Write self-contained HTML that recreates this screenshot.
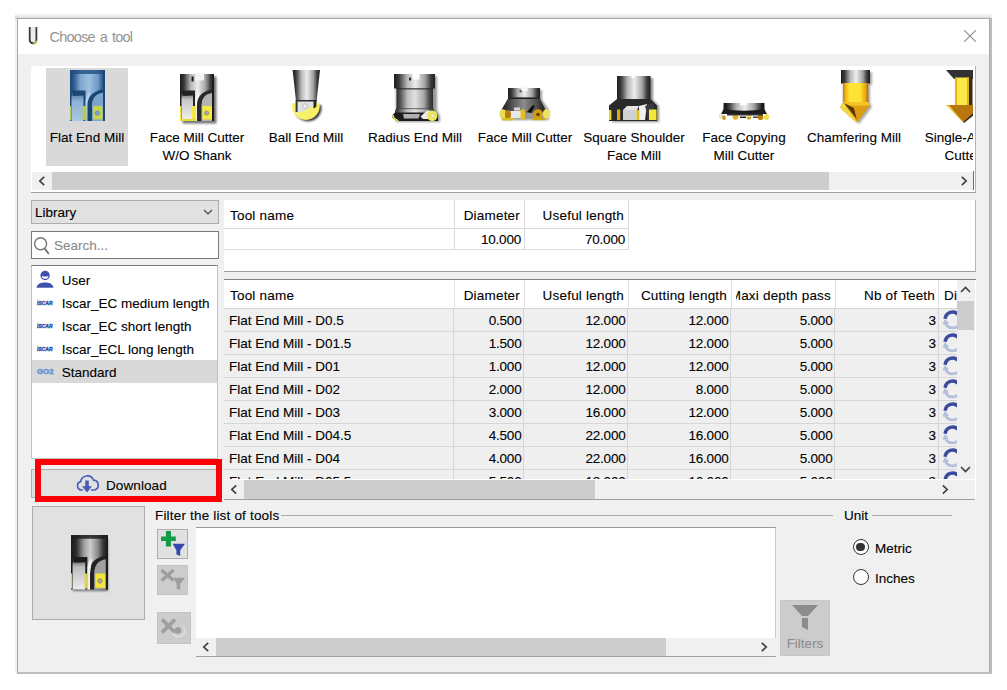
<!DOCTYPE html>
<html lang="en"><head><meta charset="utf-8"><title>Choose a tool</title>
<style>
*{box-sizing:border-box;margin:0;padding:0}
html,body{width:1007px;height:690px;overflow:hidden;background:#fff}
body{font-family:"Liberation Sans",sans-serif;font-size:13.5px;color:#000;position:relative;-webkit-text-stroke:.1px}
.abs{position:absolute}
.combo{background:#e1e1e1;border:1px solid #adadad}
.tl{text-align:center;line-height:18px;white-space:nowrap}
.li{line-height:16px;white-space:nowrap}
.hd{line-height:16px;white-space:nowrap;letter-spacing:.2px}
.r{text-align:right}
.row{position:absolute;left:0;width:733px;height:23px;background:#efefef;border-bottom:1px solid #d6d6d6}
.c{position:absolute;top:0;height:23px;line-height:23.5px;white-space:nowrap;border-right:1px solid #d6d6d6}
.c0{left:0;width:230px;padding-left:5px}
.c1{left:230px;width:70px;text-align:right;padding-right:1.5px;letter-spacing:-.2px}
.c2{left:300px;width:104px;text-align:right;padding-right:1.5px;letter-spacing:-.2px}
.c3{left:404px;width:103px;text-align:right;padding-right:1.5px;letter-spacing:-.2px}
.c4{left:507px;width:104px;text-align:right;padding-right:1.5px;letter-spacing:-.2px}
.c5{left:611px;width:104px;text-align:right;padding-right:2.2px;letter-spacing:-.2px}
.c6{left:715px;width:18px;border-right:0;overflow:hidden}
.ref{position:absolute;left:1.8px;top:0}

</style></head>
<body>
<svg width="0" height="0" style="position:absolute">
<defs>
<symbol id="refresh" viewBox="0 0 20 20">
<path d="M3.800 12.200A6.600 6.600 0 0 0 16 12.600" fill="none" stroke="#b4bedd" stroke-width="2.400"/>
<path d="M1.200 13.600L3.400 8.800L7 12.600Z" fill="#b4bedd"/>
<path d="M14.800 4.600A6.600 6.600 0 0 0 3.600 8.400" fill="none" stroke="#3b4b9e" stroke-width="3"/>
</symbol>
</defs>
</svg>
<div class="abs" style="left:15px;top:14px;width:977px;height:6px;background:linear-gradient(#f6f6f6,#e6e6e6 50%,#c6c6c6)"></div>
<div class="abs" style="left:15px;top:14px;width:3px;height:660px;background:#f3f3f3"></div>
<div class="abs" style="left:15px;top:14px;width:3px;height:5px;background:linear-gradient(#f6f6f6,#e6e6e6 50%,#c6c6c6)"></div>
<div class="abs" id="dlg" style="left:17px;top:18px;width:975px;height:656px;background:#f0f0f0;border-left:1px solid #a6a6a6;border-top:1px solid #a9a9a9;border-right:3px solid #bdbdbd;border-bottom:2px solid #bdbdbd"></div>
<div class="abs" style="left:989px;top:19px;width:1px;height:653px;background:#aaa"></div>
<div class="abs" id="title" style="left:18px;top:19px;width:971px;height:35px;background:#fff"></div>
<div class="abs" style="left:49.500px;top:26.500px;font-size:14.500px;line-height:20px;color:#959595;white-space:nowrap;letter-spacing:-.8px;word-spacing:1.800px;-webkit-text-stroke:0">Choose a tool</div>
<svg class="abs" style="left:961.700px;top:28.200px" width="16" height="16" viewBox="0 0 16 16"><path d="M2.300 2.300L13.700 13.700M13.700 2.300L2.300 13.700" stroke="#888" stroke-width="1.100" fill="none"/></svg>
<svg class="abs" style="left:27px;top:25px" width="13" height="21" viewBox="0 0 13 21"><path d="M2.700 2V15a3.350 3.350 0 0 0 6.700 0V2" fill="#ececec" stroke="#3a3a3a" stroke-width="1.800"/><path d="M6.050 18.900a3.800 3.800 0 0 0 3.300-3.200" stroke="#b8c23a" stroke-width="1.800" fill="none"/></svg>

<!-- tool type strip -->
<div class="abs" id="strip" style="left:31px;top:66px;width:945px;height:127px;background:#fff;border-right:1px solid #b4b4b4;border-bottom:1px solid #a0a0a0"></div>
<div class="abs" id="stripclip" style="left:0;top:0;width:973px;height:172px;overflow:hidden">
  <div class="abs" style="left:46px;top:68px;width:82px;height:98px;background:#d9d9d9"></div>
  <div class="abs tl" style="left:7px;top:128.500px;width:160px">Flat End Mill</div>
  <div class="abs tl" style="left:117px;top:128.500px;width:160px">Face Mill Cutter<br>W/O Shank</div>
  <div class="abs tl" style="left:226px;top:128.500px;width:160px">Ball End Mill</div>
  <div class="abs tl" style="left:335px;top:128.500px;width:160px">Radius End Mill</div>
  <div class="abs tl" style="left:445px;top:128.500px;width:160px">Face Mill Cutter</div>
  <div class="abs tl" style="left:554px;top:128.500px;width:160px">Square Shoulder<br>Face Mill</div>
  <div class="abs tl" style="left:664px;top:128.500px;width:160px">Face Copying<br>Mill Cutter</div>
  <div class="abs tl" style="left:774px;top:128.500px;width:160px">Chamfering Mill</div>
  <div class="abs tl" style="left:883px;top:128.500px;width:160px">Single-Angle<br>Cutter</div>
  <svg class="abs" style="left:0;top:0" width="973" height="172" viewBox="0 0 973 172">
<defs>
<linearGradient id="gBlue" x1="0" x2="1" y1="0" y2="0"><stop offset="0" stop-color="#1b4672"/><stop offset=".12" stop-color="#2d5f92"/><stop offset=".3" stop-color="#7fa8d0"/><stop offset=".55" stop-color="#9dbfde"/><stop offset=".8" stop-color="#6d9ac6"/><stop offset=".93" stop-color="#2a5a8c"/><stop offset="1" stop-color="#1b4672"/></linearGradient>
<linearGradient id="gBlueL" x1="0" x2="0" y1="0" y2="1"><stop offset="0" stop-color="#3d6c9c"/><stop offset=".35" stop-color="#8fb3d6"/><stop offset="1" stop-color="#a9c6e2"/></linearGradient>
<linearGradient id="gMet" x1="0" x2="1" y1="0" y2="0"><stop offset="0" stop-color="#1e1e1e"/><stop offset=".12" stop-color="#3a3a3a"/><stop offset=".32" stop-color="#b8b8b8"/><stop offset=".52" stop-color="#ededed"/><stop offset=".75" stop-color="#a4a4a4"/><stop offset=".9" stop-color="#3c3c3c"/><stop offset="1" stop-color="#1e1e1e"/></linearGradient>
<linearGradient id="gMet2" x1="0" x2="1" y1="0" y2="0"><stop offset="0" stop-color="#2c2c2c"/><stop offset=".12" stop-color="#5a5a5a"/><stop offset=".3" stop-color="#bdbdbd"/><stop offset=".5" stop-color="#e2e2e2"/><stop offset=".75" stop-color="#a8a8a8"/><stop offset=".9" stop-color="#4a4a4a"/><stop offset="1" stop-color="#2a2a2a"/></linearGradient>
<linearGradient id="gMet3" x1="0" x2="1" y1="0" y2="0"><stop offset="0" stop-color="#1e1e1e"/><stop offset=".2" stop-color="#4a4a4a"/><stop offset=".5" stop-color="#8c8c8c"/><stop offset=".8" stop-color="#505050"/><stop offset="1" stop-color="#1e1e1e"/></linearGradient>
<linearGradient id="gMetL" x1="0" x2="0" y1="0" y2="1"><stop offset="0" stop-color="#4a4a4a"/><stop offset=".3" stop-color="#c8c8c8"/><stop offset="1" stop-color="#f2f2f2"/></linearGradient>
<linearGradient id="gGold" x1="0" x2="1" y1="0" y2="0"><stop offset="0" stop-color="#c07a08"/><stop offset=".1" stop-color="#f2b818"/><stop offset=".27" stop-color="#ffe63a"/><stop offset=".68" stop-color="#ffe232"/><stop offset=".9" stop-color="#e8a410"/><stop offset="1" stop-color="#a86806"/></linearGradient>
<filter id="sh" x="-20%" y="-20%" width="150%" height="150%"><feGaussianBlur stdDeviation="1"/></filter>
<filter id="bl" x="-10%" y="-10%" width="120%" height="120%"><feGaussianBlur stdDeviation=".5"/></filter>
<g id="endmill">
  <rect x="0" y="0" width="35" height="51" fill="url(#gm)"/>
</g>
</defs>

<!-- 1: Flat End Mill (selected, blue) -->
<g transform="translate(70,70)" filter="url(#bl)">
  <rect x="0" y="0" width="35" height="51" fill="url(#gBlue)"/>
  <rect x="0" y="0" width="35" height="4" fill="#1f4f7e" opacity=".8"/>
  <path d="M1.5 51V27L4 21H15V51Z" fill="url(#gBlueL)"/>
  <path d="M2 20.5H15.5V51H13.5V25.5L3 26Z" fill="#1c4470"/>
  <path d="M15.500 51V31C16 26 17.500 23.500 20 21.500L18 36V51Z" fill="#b4cfea"/><path d="M17.500 51V36C17.500 27.500 21 22.500 31.500 19.500L33 20.200V22.300C26 23.800 22.200 28 22.200 36V51Z" fill="#1c4470"/>
  <path d="M22.200 51V36C22.200 29 25 24.500 33 22.800V51Z" fill="#7ba4cd"/>
  <rect x="12.5" y="36" width="4" height="14" fill="#b3cb60"/>
  <rect x="0" y="36" width="1.200" height="14" fill="#b3cb60"/>
  <rect x="23" y="36" width="9.5" height="13.5" fill="#c6d350"/>
  <circle cx="27.4" cy="43" r="2.1" fill="#7f9fd0" stroke="#5d83b8" stroke-width=".8"/>
  <rect x="33" y="0" width="2" height="51" fill="#1b4672"/>
</g>

<!-- 2: Face Mill Cutter W/O Shank -->
<g transform="translate(180,74)">
  <rect x="2.5" y="2.5" width="34" height="47" fill="#000" opacity=".55" filter="url(#sh)"/>
  <g filter="url(#bl)">
  <rect x="0" y="0" width="34" height="47" fill="url(#gMet)"/>
  <rect x="15.5" y="-1" width="8.5" height="7.5" fill="#f4f4f4"/>
  <rect x="11.5" y="2.5" width="2.2" height="5" fill="#222"/>
  <path d="M1.5 47V23L4 17H14.5V47Z" fill="url(#gMetL)"/>
  <path d="M2 16.5H15V47H13V21.5L3 22Z" fill="#222"/>
  <path d="M15 47V27C15.500 22 17 19.500 19.500 17.500L17.500 32V47Z" fill="#f4f4f4"/><path d="M17 47V32C17 23.500 20.500 18.500 30.500 15.800L32 16.500V18.600C25.500 20 21.700 24 21.700 32V47Z" fill="#2a2a2a"/>
  <path d="M21.700 47V32C21.700 25 24.500 20.800 32 19V47Z" fill="#b4b4b4"/>
  <rect x="12" y="32" width="4.2" height="14" fill="#f2e94a"/>
  <rect x="0" y="32" width="1.200" height="14" fill="#f2e94a"/>
  <rect x="22.5" y="32" width="9.5" height="13.5" fill="#f6ea3c"/>
  <rect x="0" y="45" width="16" height="2" fill="#e8dc30"/>
  <circle cx="26.6" cy="39" r="2.1" fill="#a8a8a8" stroke="#8a8a70" stroke-width=".8"/>
  <rect x="32" y="0" width="2" height="47" fill="#1e1e1e"/>
  </g>
</g>

<!-- 3: Ball End Mill -->
<g transform="translate(292,70)">
  <path d="M3 35H29.200A13.500 13.500 0 0 1 4 44Z" fill="#000" opacity=".8" filter="url(#sh)"/>
  <g filter="url(#bl)">
  <path d="M.4 33.300H27.400A13.800 13.800 0 1 1 .4 33.300Z" fill="#f6f168"/>
  <path d="M.6 0H28L24.6 31H4Z" fill="url(#gMet)"/>
  <path d="M4.5 30.5H22V34C20 38 12 42.500 4.500 42.500Z" fill="#e2e2e4"/>
  <rect x="4.500" y="30" width="20" height="1.500" fill="#2a2a2a"/>
  <rect x="3.600" y="30" width="2" height="12" fill="#3a3a3a"/>
  <path d="M21.500 30H24.700L24.200 37L21.500 38.500Z" fill="#2a2a2e"/>
  <circle cx="13" cy="36.300" r="2.600" fill="#ececee" stroke="#c0c0c6" stroke-width="1"/>
  </g>
</g>

<!-- 4: Radius End Mill -->
<g transform="translate(392,74)">
  <path d="M4 2H45V36L48 42V48H4Z" fill="#000" opacity=".4" filter="url(#sh)"/>
  <g filter="url(#bl)">
  <rect x="2" y="0" width="41" height="14.500" fill="url(#gMet)"/>
  <rect x="20.500" y="-1" width="7" height="6.500" fill="#fff"/>
  <rect x="17" y="3.500" width="2.200" height="3" fill="#333"/>
  <rect x="4.500" y="14" width="36.500" height="21" fill="url(#gMet2)"/>
  <rect x="4.500" y="14" width="36.500" height="1.600" fill="#2a2a2a" opacity=".7"/>
  <path d="M4.500 34H41L43 38V40H3V37Z" fill="url(#gMet2)"/>
  <rect x="4.500" y="34" width="36.500" height="1.200" fill="#333" opacity=".6"/>
  <path d="M3 38.500H44L46 41V47H5L.5 44V41Z" fill="#1c1c1c"/>
  <path d="M11 40H28L26.500 44.500H12Z" fill="#b0b0b0"/>
  <path d="M28.500 42.500L35 36.500L42 37L40 45L31 45Z" fill="#ececec"/>
  <circle cx="40.200" cy="41.800" r="5.300" fill="#ece65a"/>
  <circle cx="40.600" cy="41.600" r="1.700" fill="#f4f0e8" stroke="#d0c870" stroke-width=".6"/>
  <path d="M.3 41C0 44 2.500 46.500 7.500 47.500L5.500 45.500C3 44.500 2 43 1.800 41Z" fill="#ece65a"/>
  </g>
</g>

<!-- 5: Face Mill Cutter -->
<g transform="translate(499,88)">
  <path d="M11 2H43V12L50 22V32H3V22L11 12Z" fill="#000" opacity=".4" filter="url(#sh)"/>
  <g filter="url(#bl)">
  <rect x="9" y="0" width="32" height="10" fill="url(#gMet)"/>
  <rect x="22.5" y="-1" width="6" height="4" fill="#f8f8f8"/>
  <rect x="20.5" y="2" width="2" height="2.4" fill="#555"/>
  <path d="M9.500 9.500H40.500L46 21V25H3V21Z" fill="url(#gMet3)"/>
  
  <path d="M9.500 9.500H40.500V11H9.500Z" fill="#222"/>
  <path d="M28 24L34 17L36 18L32 25Z" fill="#111"/>
  <rect x="10" y="23" width="12" height="7" fill="#e8e8e8"/>
  <rect x="15" y="19.500" width="6" height="3" fill="#d8d8d8"/>
  <ellipse cx="4" cy="26" rx="3.6" ry="4.800" fill="#e6dc58"/>
  <ellipse cx="9" cy="26.500" rx="3" ry="4.500" fill="#b87a10"/>
  <rect x="21.500" y="21.500" width="4.500" height="10" fill="#e6c020"/>
  <circle cx="39" cy="26" r="4.800" fill="#d89a10"/>
  <circle cx="39" cy="26.500" r="1.700" fill="#5a3a08"/>
  <ellipse cx="47.500" cy="26" rx="3.800" ry="4.800" fill="#ece460"/>
  <path d="M3 30H16L14 32.500H4Z" fill="#d8c020"/>
  <path d="M32 30H47L45 32.300H34Z" fill="#caa818"/>
  </g>
</g>

<!-- 6: Square Shoulder Face Mill -->
<g transform="translate(609,76)">
  <path d="M10 2H44V24L50 30V46H3V30L10 24Z" fill="#000" opacity=".45" filter="url(#sh)"/>
  <g filter="url(#bl)">
  <rect x="8" y="0" width="33.500" height="24" fill="url(#gMet)"/>
  <path d="M21 -1H27L25 2H23Z" fill="#fff"/>
  <path d="M8 23H41.500L48 29.500V45H0V29.500Z" fill="#2c2c2c"/>
  <path d="M14 34L18 30H30L28 34V44H14Z" fill="#e4e4e4"/>
  <path d="M14 34H27V44H14Z" fill="#d0d0d0"/>
  <path d="M30 30L38 28L36 44H30Z" fill="#f0f0f0"/>
  <path d="M36 30L44 27L46 34V44H40Z" fill="#3a3a3a"/>
  <rect x="0" y="34" width="2.400" height="10" fill="#e8d820"/>
  <rect x="8" y="33.500" width="3.200" height="10.500" fill="#e0a818"/>
  <rect x="27.500" y="34" width="2.800" height="10" fill="#d8c020"/>
  <rect x="40" y="33.500" width="7.500" height="10.500" fill="#f4e83a"/>
  </g>
</g>

<!-- 7: Face Copying Mill Cutter -->
<g transform="translate(718,103)">
  <g filter="url(#bl)">
  <rect x="6" y="0" width="40" height="8.500" fill="url(#gMet)"/>
  <rect x="22" y="-1" width="7" height="3.200" fill="#fff"/>
  <path d="M6 5.500C16 8.500 36 8.500 46 5.500L49 11H3Z" fill="#1a1a1a"/>
  <rect x="5.500" y="0" width="3.500" height="10" fill="#1a1a1a"/>
  <rect x="43" y="0" width="3.500" height="10" fill="#1a1a1a"/>
  <ellipse cx="3.500" cy="13.500" rx="2.800" ry="2.800" fill="#e8e4d0"/>
  <ellipse cx="6" cy="14.800" rx="1.800" ry="2.200" fill="#c89818"/>
  <ellipse cx="17.500" cy="14.300" rx="2.800" ry="2.400" fill="#e0b820"/>
  <ellipse cx="31" cy="13.500" rx="2.600" ry="2.600" fill="#e8d878"/>
  <ellipse cx="31" cy="15.200" rx="1.800" ry="1.300" fill="#c89818"/>
  <ellipse cx="42.500" cy="14.200" rx="2.800" ry="2.800" fill="#c07c10"/>
  <ellipse cx="48.500" cy="14" rx="2.600" ry="3" fill="#ece050"/>
  <rect x="9" y="11" width="36" height="1.500" fill="#333"/>
  <rect x="22" y="13.500" width="6" height="1.500" fill="#222"/>
  <rect x="35" y="13.500" width="5" height="1.500" fill="#444"/>
  </g>
</g>

<!-- 8: Chamfering Mill -->
<g transform="translate(840,70)">
  <path d="M3 2H32V15H30V33L32 37L19 54L3 38Z" fill="#000" opacity=".35" filter="url(#sh)"/>
  <g filter="url(#bl)">
  <rect x="1" y="0" width="29" height="13.500" fill="url(#gMet)"/>
  <rect x="3.200" y="13" width="25" height="19.500" fill="url(#gGold)"/>
  <path d="M3.200 32H28.200L29.500 35.500L17 52.500L10 47L0 37.500Z" fill="#e0a214"/>
  <path d="M3.200 32H28.200L29.500 35.500H2Z" fill="#f4c428"/>
  <path d="M0 37L3.500 33L17 52L12 49Z" fill="#f4d848"/>
  <path d="M4 33L14 38L17.500 50Z" fill="#5a3806"/>
  <path d="M14 38L29.500 35.500L17.500 52Z" fill="#dc9c12"/>
  </g>
</g>

<!-- 9: Single-Angle Cutter -->
<g transform="translate(946,70)">
  <g filter="url(#bl)">
  <path d="M0 0H28V9H8Z" fill="#303030"/>
  <rect x="22.500" y="7" width="4" height="30" fill="#3a2a10"/>
  <rect x="9.500" y="7.500" width="13.500" height="28" fill="#fbe84a"/>
  <rect x="9" y="7.500" width="2" height="28" fill="#e8b018"/>
  <rect x="21" y="7.500" width="2" height="28" fill="#e8b018"/>
  <path d="M0 35H28V42L17 52Z" fill="#b87608"/>
  <path d="M0 35L3 35.500L17 52L15.500 51Z" fill="#f8e858"/>
  <path d="M17 52L28 42V45L18 53Z" fill="#3a2a10"/>
  </g>
</g>
</svg>

</div>
<div class="abs" style="left:32px;top:172px;width:942px;height:18px;background:#f0f0f0"></div>
<div class="abs" style="left:52px;top:172px;width:777px;height:18px;background:#cdcdcd"></div>
<svg class="abs" style="left:32px;top:172px" width="20" height="18" viewBox="0 0 20 18"><path d="M12.2 4.8L7.8 9l4.4 4.2" fill="none" stroke="#404040" stroke-width="1.7"/></svg>
<svg class="abs" style="left:954px;top:172px" width="20" height="18" viewBox="0 0 20 18"><path d="M7.8 4.800L12.2 9l-4.400 4.200" fill="none" stroke="#404040" stroke-width="1.7"/></svg>
<div class="abs" style="left:973px;top:171px;width:1px;height:19px;background:#6e6e6e"></div>

<!-- left column -->
<div class="abs combo" style="left:31px;top:200px;width:188px;height:24px"></div>
<div class="abs" style="left:35px;top:205px;line-height:16px;white-space:nowrap">Library</div>
<svg class="abs" style="left:202px;top:208.300px" width="12" height="8" viewBox="0 0 12 8"><path d="M2 2L6 6l4-4" fill="none" stroke="#4a4a4a" stroke-width="1.200"/></svg>
<div class="abs" style="left:31px;top:231px;width:188px;height:28px;background:#fff;border:1px solid #7a7a7a"></div>
<svg class="abs" style="left:32px;top:235px" width="20" height="22" viewBox="0 0 20 22"><circle cx="8.600" cy="8.800" r="6" fill="none" stroke="#7d757d" stroke-width="1.500"/><path d="M12.600 13.400L16.800 19" stroke="#7d757d" stroke-width="2"/></svg>
<div class="abs" style="left:54px;top:238px;line-height:16px;color:#8a8a8a;white-space:nowrap">Search...</div>
<div class="abs" style="left:31px;top:265px;width:187px;height:194px;background:#fff;border:1px solid #c2c2c2;border-top-color:#7a7a7a"></div>
<div class="abs" style="left:32px;top:360px;width:185px;height:22.500px;background:#d9d9d9"></div>
<div class="abs li" style="left:61.800px;top:272.500px">User</div>
<div class="abs li" style="left:61.800px;top:295.500px">Iscar_EC medium length</div>
<div class="abs li" style="left:61.800px;top:318.500px">Iscar_EC short length</div>
<div class="abs li" style="left:61.800px;top:341.500px">Iscar_ECL long length</div>
<div class="abs li" style="left:61.800px;top:364.500px">Standard</div>
<svg class="abs" style="left:35px;top:269px" width="20" height="20" viewBox="0 0 20 20"><circle cx="10.100" cy="6.500" r="4.700" fill="#3f4fae"/><path d="M6.700 6.900Q10.100 8 13.500 6.900A3.450 3.450 0 0 1 6.700 6.900Z" fill="#fff"/><path d="M1.500 18.700C2.500 14.500 6 13.600 10 13.600S17.500 14.500 18.500 18.700Z" fill="#3f4fae"/></svg>
<svg class="abs" style="left:35px;top:298px" width="20" height="9" viewBox="0 0 20 9"><text x="2" y="6.800" font-family="Liberation Sans,sans-serif" font-size="5.600" font-weight="bold" font-style="italic" fill="#2b4da8" stroke="#2b4da8" stroke-width=".4" textLength="15.500" lengthAdjust="spacingAndGlyphs">ISCAR</text><rect x="2" y="1.300" width="1.600" height="1.400" fill="#e8d040"/></svg>
<svg class="abs" style="left:35px;top:321px" width="20" height="9" viewBox="0 0 20 9"><text x="2" y="6.800" font-family="Liberation Sans,sans-serif" font-size="5.600" font-weight="bold" font-style="italic" fill="#2b4da8" stroke="#2b4da8" stroke-width=".4" textLength="15.500" lengthAdjust="spacingAndGlyphs">ISCAR</text><rect x="2" y="1.300" width="1.600" height="1.400" fill="#e8d040"/></svg>
<svg class="abs" style="left:35px;top:344px" width="20" height="9" viewBox="0 0 20 9"><text x="2" y="6.800" font-family="Liberation Sans,sans-serif" font-size="5.600" font-weight="bold" font-style="italic" fill="#2b4da8" stroke="#2b4da8" stroke-width=".4" textLength="15.500" lengthAdjust="spacingAndGlyphs">ISCAR</text><rect x="2" y="1.300" width="1.600" height="1.400" fill="#e8d040"/></svg>
<svg class="abs" style="left:35px;top:366px" width="20" height="10" viewBox="0 0 20 10"><text x="2" y="8" font-family="Liberation Sans,sans-serif" font-size="6.800" font-weight="bold" fill="#6a94d4" stroke="#6a94d4" stroke-width=".5" textLength="16.500" lengthAdjust="spacingAndGlyphs">GO2</text></svg>
<div class="abs" style="left:31px;top:469px;width:189px;height:29px;background:#e1e1e1;border:1px solid #adadad"></div>
<div class="abs" style="left:35px;top:459px;width:187px;height:43px;border:6px solid #fb0007"></div>
<div class="abs" style="left:106px;top:478px;line-height:16px;white-space:nowrap;letter-spacing:.1px">Download</div>
<svg class="abs" style="left:75px;top:472px" width="27" height="22" viewBox="0 0 27 22"><path d="M7.200 18H6.400A4.300 4.300 0 0 1 5.600 9.600A6.800 6.800 0 0 1 18.600 8.200A5 5 0 0 1 19.600 18H16.600" fill="none" stroke="#4a5cb8" stroke-width="1.700" stroke-linecap="round"/><path d="M10.200 8.600H13.800V14.200H17L12 20.400L7 14.200H10.200Z" fill="#4a5cb8"/></svg>

<!-- current tool panel -->
<div class="abs" style="left:224px;top:200px;width:752px;height:72px;background:#fff;border-bottom:1px solid #a0a0a0;border-right:1px solid #b8b8b8"></div>
<div class="abs" style="left:224px;top:228px;width:405px;height:1px;background:#dcdcdc"></div>
<div class="abs" style="left:224px;top:249px;width:405px;height:1px;background:#dcdcdc"></div>
<div class="abs" style="left:454px;top:200px;width:1px;height:50px;background:#dcdcdc"></div>
<div class="abs" style="left:524px;top:200px;width:1px;height:50px;background:#dcdcdc"></div>
<div class="abs" style="left:628px;top:200px;width:1px;height:50px;background:#dcdcdc"></div>
<div class="abs hd" style="left:230px;top:207.600px">Tool name</div>
<div class="abs hd r" style="left:458px;top:207.600px;width:62px">Diameter</div>
<div class="abs hd r" style="left:528px;top:207.600px;width:96px">Useful length</div>
<div class="abs hd r" style="left:458px;top:231.600px;width:63px;letter-spacing:-.2px">10.000</div>
<div class="abs hd r" style="left:528px;top:231.600px;width:97px;letter-spacing:-.2px">70.000</div>

<!-- table -->
<div class="abs" id="tbl" style="left:224px;top:279px;width:752px;height:221px;background:#fff;border-top:1px solid #828282;overflow:hidden">
  <div class="abs" style="left:0;top:0;width:733px;height:28px;background:#fff"></div>
  <div class="abs hd" style="left:6px;top:7.500px">Tool name</div>
  <div class="abs hd r" style="left:234px;top:7.500px;width:62px">Diameter</div>
  <div class="abs hd r" style="left:304px;top:7.500px;width:96px">Useful length</div>
  <div class="abs hd r" style="left:408px;top:7.500px;width:95px">Cutting length</div>
  <div class="abs hd" style="left:512px;top:7.500px;width:95px;height:18px;overflow:hidden"><span class="abs" style="right:0;top:0">Maxi depth pass</span></div>
  <div class="abs hd r" style="left:616px;top:7.500px;width:95px">Nb of Teeth</div>
  <div class="abs hd" style="left:720px;top:7.500px;width:13px;overflow:hidden">Di</div>
  <div class="abs" style="left:0;top:0;width:733px;height:199px;overflow:hidden">
  <div class="row" style="top:29px"><span class="c c0">Flat End Mill - D0.5</span><span class="c c1">0.500</span><span class="c c2">12.000</span><span class="c c3">12.000</span><span class="c c4">5.000</span><span class="c c5">3</span><span class="c c6"><svg class="ref" width="23" height="23" viewBox="0 0 20 20"><use href="#refresh"/></svg></span></div>
<div class="row" style="top:52px"><span class="c c0">Flat End Mill - D01.5</span><span class="c c1">1.500</span><span class="c c2">12.000</span><span class="c c3">12.000</span><span class="c c4">5.000</span><span class="c c5">3</span><span class="c c6"><svg class="ref" width="23" height="23" viewBox="0 0 20 20"><use href="#refresh"/></svg></span></div>
<div class="row" style="top:75px"><span class="c c0">Flat End Mill - D01</span><span class="c c1">1.000</span><span class="c c2">12.000</span><span class="c c3">12.000</span><span class="c c4">5.000</span><span class="c c5">3</span><span class="c c6"><svg class="ref" width="23" height="23" viewBox="0 0 20 20"><use href="#refresh"/></svg></span></div>
<div class="row" style="top:98px"><span class="c c0">Flat End Mill - D02</span><span class="c c1">2.000</span><span class="c c2">12.000</span><span class="c c3">8.000</span><span class="c c4">5.000</span><span class="c c5">3</span><span class="c c6"><svg class="ref" width="23" height="23" viewBox="0 0 20 20"><use href="#refresh"/></svg></span></div>
<div class="row" style="top:121px"><span class="c c0">Flat End Mill - D03</span><span class="c c1">3.000</span><span class="c c2">16.000</span><span class="c c3">12.000</span><span class="c c4">5.000</span><span class="c c5">3</span><span class="c c6"><svg class="ref" width="23" height="23" viewBox="0 0 20 20"><use href="#refresh"/></svg></span></div>
<div class="row" style="top:144px"><span class="c c0">Flat End Mill - D04.5</span><span class="c c1">4.500</span><span class="c c2">22.000</span><span class="c c3">16.000</span><span class="c c4">5.000</span><span class="c c5">3</span><span class="c c6"><svg class="ref" width="23" height="23" viewBox="0 0 20 20"><use href="#refresh"/></svg></span></div>
<div class="row" style="top:167px"><span class="c c0">Flat End Mill - D04</span><span class="c c1">4.000</span><span class="c c2">22.000</span><span class="c c3">16.000</span><span class="c c4">5.000</span><span class="c c5">3</span><span class="c c6"><svg class="ref" width="23" height="23" viewBox="0 0 20 20"><use href="#refresh"/></svg></span></div>
<div class="row" style="top:190px"><span class="c c0">Flat End Mill - D05.5</span><span class="c c1">5.500</span><span class="c c2">18.000</span><span class="c c3">16.000</span><span class="c c4">5.000</span><span class="c c5">3</span><span class="c c6"><svg class="ref" width="23" height="23" viewBox="0 0 20 20"><use href="#refresh"/></svg></span></div>
  </div>
  <div class="abs" style="left:0;top:28px;width:733px;height:1px;background:#d6d6d6"></div>
  <div class="abs" style="left:230px;top:0;width:1px;height:28px;background:#e0e0e0"></div>
  <div class="abs" style="left:300px;top:0;width:1px;height:28px;background:#e0e0e0"></div>
  <div class="abs" style="left:404px;top:0;width:1px;height:28px;background:#e0e0e0"></div>
  <div class="abs" style="left:507px;top:0;width:1px;height:28px;background:#e0e0e0"></div>
  <div class="abs" style="left:611px;top:0;width:1px;height:28px;background:#e0e0e0"></div>
  <div class="abs" style="left:714px;top:0;width:1px;height:28px;background:#e0e0e0"></div>
  <!-- v scrollbar -->
  <div class="abs" style="left:733px;top:0;width:18px;height:199px;background:#f0f0f0"></div>
  <div class="abs" style="left:733px;top:20.500px;width:17px;height:29px;background:#cdcdcd"></div>
  <svg class="abs" style="left:732px;top:0" width="19" height="20" viewBox="0 0 19 20"><path d="M5 12l4.5-4.5L14 12" fill="none" stroke="#404040" stroke-width="1.6"/></svg>
  <svg class="abs" style="left:732px;top:179px" width="19" height="20" viewBox="0 0 19 20"><path d="M5 8l4.5 4.500L14 8" fill="none" stroke="#404040" stroke-width="1.6"/></svg>
  <!-- h scrollbar -->
  <div class="abs" style="left:0;top:200px;width:751px;height:19px;background:#f0f0f0"></div>
  <div class="abs" style="left:20px;top:200px;width:351px;height:19px;background:#cdcdcd"></div>
  <svg class="abs" style="left:0;top:200px" width="20" height="19" viewBox="0 0 20 19"><path d="M12.2 5.3L7.8 9.5l4.4 4.2" fill="none" stroke="#404040" stroke-width="1.7"/></svg>
  <svg class="abs" style="left:711px;top:200px" width="20" height="19" viewBox="0 0 20 19"><path d="M7.8 5.3L12.2 9.5l-4.4 4.2" fill="none" stroke="#404040" stroke-width="1.7"/></svg>
</div>
<div class="abs" style="left:224px;top:499px;width:752px;height:1px;background:#a0a0a0"></div>
<div class="abs" style="left:975px;top:280px;width:1px;height:220px;background:#fff"></div>

<!-- bottom -->
<div class="abs" style="left:32px;top:506px;width:113px;height:114px;background:#e1e1e1;border:1px solid #adadad"></div>
<svg class="abs" style="left:66px;top:530px" width="50" height="66" viewBox="0 0 50 66">
<defs><linearGradient id="pMet" x1="0" x2="1" y1="0" y2="0"><stop offset="0" stop-color="#1a1a1a"/><stop offset=".15" stop-color="#2e2e2e"/><stop offset=".35" stop-color="#9c9c9c"/><stop offset=".52" stop-color="#cecece"/><stop offset=".72" stop-color="#8c8c8c"/><stop offset=".88" stop-color="#333"/><stop offset="1" stop-color="#1a1a1a"/></linearGradient>
<linearGradient id="pMetL" x1="0" x2="0" y1="0" y2="1"><stop offset="0" stop-color="#3a3a3a"/><stop offset=".3" stop-color="#bcbcbc"/><stop offset="1" stop-color="#ececec"/></linearGradient>
<filter id="pbl" x="-10%" y="-10%" width="120%" height="120%"><feGaussianBlur stdDeviation=".55"/></filter>
<filter id="psh" x="-20%" y="-20%" width="150%" height="150%"><feGaussianBlur stdDeviation="1.2"/></filter></defs>
<rect x="7" y="9" width="35" height="52" fill="#000" opacity=".5" filter="url(#psh)"/>
<g transform="translate(5,5) scale(1.057,1.068)" filter="url(#pbl)">
  <rect x="0" y="0" width="35" height="51" fill="url(#pMet)"/>
  <rect x="0" y="0" width="35" height="3.500" fill="#1e1e1e" opacity=".85"/>
  <path d="M1.500 51V27L4 21H15V51Z" fill="url(#pMetL)"/>
  <path d="M2 20.500H15.500V51H13.500V25.500L3 26Z" fill="#1e1e1e"/>
  <path d="M17.500 51V36C17.500 27.500 21 22.500 31.500 19.500L33 20.200V22.300C26 23.800 22.200 28 22.200 36V51Z" fill="#222"/>
  <path d="M22.200 51V36C22.200 29 25 24.500 33 22.800V51Z" fill="#a0a0a0"/>
  <path d="M15.500 51V31C16 26 17.500 23.500 20 21.500L18 36V51Z" fill="#f0f0f0"/>
  <rect x="12.800" y="36" width="3.400" height="14" fill="#dcd258"/>
  <rect x="0" y="36" width="1.100" height="14" fill="#dcd468"/>
  <rect x="23" y="36" width="9.500" height="13.500" fill="#f2e63e"/>
  <circle cx="27.400" cy="43" r="2.100" fill="#a8a8a0" stroke="#8a8660" stroke-width=".8"/>
  <rect x="33" y="0" width="2" height="51" fill="#1c1c1c"/>
</g>
</svg>
<div class="abs" style="left:155px;top:508px;line-height:16px;white-space:nowrap;letter-spacing:.18px">Filter the list of tools</div>
<div class="abs" style="left:281px;top:515px;width:552px;height:1px;background:#a8a8a8"></div>
<div class="abs" style="left:844px;top:508px;line-height:16px;white-space:nowrap">Unit</div>
<div class="abs" style="left:872px;top:515px;width:80px;height:1px;background:#a8a8a8"></div>
<div class="abs" style="left:157px;top:528.500px;width:31px;height:30px;background:#e1e1e1;border:1px solid #adadad"></div>
<div class="abs" style="left:157px;top:564.500px;width:31px;height:30px;background:#cccccc;border:1px solid #c4c4c4"></div>
<div class="abs" style="left:157px;top:611.500px;width:33.500px;height:32.500px;background:#cccccc;border:1px solid #c4c4c4"></div>
<svg class="abs" style="left:157px;top:528px" width="32" height="32" viewBox="0 0 32 32"><path d="M4 8.500H18.800V13.100H4ZM8.900 3H14V18.500H8.900Z" fill="#119a48"/><path d="M15.600 15.700H28L23.200 22.300V28L19.400 26.500V22.300Z" fill="#3548b0"/></svg>
<svg class="abs" style="left:157px;top:564px" width="32" height="32" viewBox="0 0 32 32"><path d="M4.500 6L16.500 16.500M16.500 6L4.500 16.500" stroke="#9e9e9e" stroke-width="3.600" fill="none"/><path d="M16.600 13.700H28L23.200 20V26L19.600 24.500V20Z" fill="#9e9e9e"/></svg>
<svg class="abs" style="left:157px;top:611px" width="34" height="34" viewBox="0 0 34 34"><circle cx="21.500" cy="19.500" r="6.300" fill="none" stroke="#dedede" stroke-width="1.800" stroke-dasharray="26 14" transform="rotate(-40 21.500 19.500)"/><path d="M5 8.500L18 21.500M18 8.500L5 21.500" stroke="#9e9e9e" stroke-width="3.800" fill="none"/><circle cx="21" cy="19.500" r="3.200" fill="#9e9e9e"/></svg>
<div class="abs" style="left:196px;top:527px;width:580px;height:130px;background:#fff;border-top:1px solid #9a9a9a;border-bottom:1px solid #a0a0a0;border-right:1px solid #c8c8c8"></div>
<div class="abs" style="left:196px;top:638px;width:580px;height:18px;background:#f0f0f0"></div>
<div class="abs" style="left:216px;top:638px;width:450px;height:18px;background:#cdcdcd"></div>
<svg class="abs" style="left:196px;top:638px" width="20" height="18" viewBox="0 0 20 18"><path d="M12.2 4.8L7.8 9l4.4 4.2" fill="none" stroke="#404040" stroke-width="1.7"/></svg>
<svg class="abs" style="left:754px;top:638px" width="20" height="18" viewBox="0 0 20 18"><path d="M7.8 4.8L12.2 9l-4.4 4.2" fill="none" stroke="#404040" stroke-width="1.7"/></svg>
<div class="abs" style="left:780px;top:600px;width:50px;height:56px;background:#cccccc;border:1px solid #c6c6c6"></div>
<svg class="abs" style="left:790px;top:603px" width="30" height="30" viewBox="0 0 30 30"><path d="M2 2h26L18 13H12Z" fill="#8c8c8c"/><path d="M12 15h6v12l-6-3Z" fill="#8c8c8c"/></svg>
<div class="abs" style="left:780px;top:635.500px;width:50px;text-align:center;line-height:16px;color:#8c8c8c">Filters</div>
<div class="abs" style="left:852.500px;top:539px;width:16px;height:16px;border-radius:50%;border:1.200px solid #333;background:#fff"></div>
<div class="abs" style="left:856.200px;top:542.700px;width:8.600px;height:8.600px;border-radius:50%;background:#333"></div>
<div class="abs" style="left:852.500px;top:569px;width:16px;height:16px;border-radius:50%;border:1.200px solid #333;background:#fff"></div>
<div class="abs" style="left:875px;top:540.500px;line-height:16px">Metric</div>
<div class="abs" style="left:875px;top:570.500px;line-height:16px">Inches</div>

</body></html>
